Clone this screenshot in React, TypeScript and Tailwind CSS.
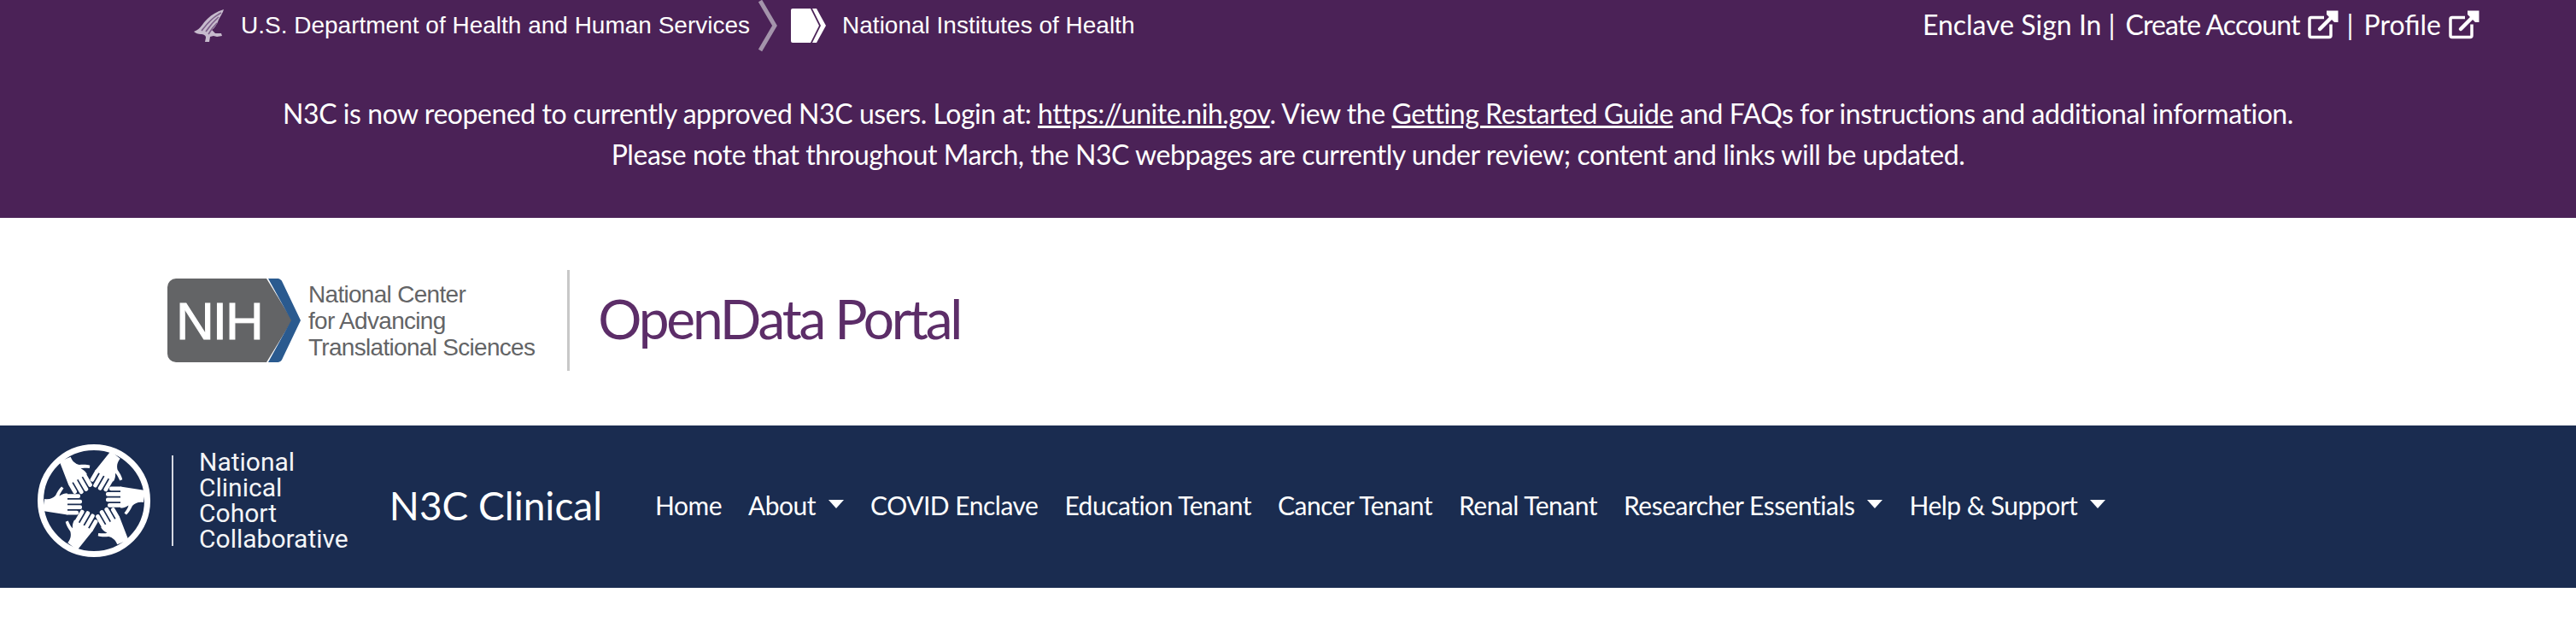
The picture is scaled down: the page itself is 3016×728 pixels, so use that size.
const body = { fontFamily: 'Lato, "Noto Sans", sans-serif' };
const arial = { fontFamily: '"Liberation Sans", Arial, sans-serif' };

function ExternalIcon() {
  return (
    <svg width="36" height="34" viewBox="0 0 36 34" className="ml-[9px] shrink-0">
      <path d="M19 8.5H4a2 2 0 0 0-2 2v19a2 2 0 0 0 2 2h21a2 2 0 0 0 2-2v-13" fill="none" stroke="white" strokeWidth="3.5" />
      <path d="M14 22L30 6" fill="none" stroke="white" strokeWidth="4.5" strokeLinecap="round" />
      <path d="M22 0.5H35.5V14L31 14L22 5z" fill="white" />
    </svg>
  );
}

function Eagle() {
  return (
    <svg width="38" height="40" viewBox="0 0 38 40" className="shrink-0">
      <path d="M1 27C7 25 10 20 14 15C19 9 26 4 36 1C35 5 32 9 30 13C28 19 25 23 22 25L26 29L33 29L34 32L28 33L24 32L20 33L19 39L14 39L15 34C15 31 12 30 9 30C6 30 3 29 1 27Z" fill="#c7bbcd" />
      <path d="M10 26C15 20 21 11 33 5M15 27C19 21 24 15 30 10M18 30C21 25 24 21 28 17" stroke="#7d5e89" strokeWidth="1.6" fill="none" />
    </svg>
  );
}

function Hand({ angle }: { angle: number }) {
  return (
    <g transform={`rotate(${angle})`}>
      <path d="M31 -16.5L60 -12L58 2C52 1 48 3 45 6C43 10 41 14 38 16.5L35.5 14.5C38 11 40 8 40.5 5.5C37 8 34 8.5 31 8.5Z" fill="white" />
      <rect x="18" y="-16.5" width="15" height="4.8" rx="2" fill="white" />
      <rect x="14" y="-10" width="19" height="4.8" rx="2" fill="white" />
      <rect x="14" y="-3.5" width="19" height="4.8" rx="2" fill="white" />
      <rect x="16" y="3" width="17" height="4.8" rx="2" fill="white" />
    </g>
  );
}

function HandsLogo() {
  return (
    <svg width="134" height="134" viewBox="-67 -67 134 134" className="shrink-0">
      <circle cx="0" cy="0" r="62.5" fill="none" stroke="white" strokeWidth="7" />
      {[0, 60, 120, 180, 240, 300].map((a) => (
        <Hand key={a} angle={a} />
      ))}
    </svg>
  );
}

function NavItem({ label, caret }: { label: string; caret?: boolean }) {
  return (
    <a className="flex items-center text-[30px] tracking-[-0.5px] text-white">
      {label}
      {caret && <span className="ml-[15px] mt-[-2px] h-0 w-0 border-x-[9px] border-t-[10px] border-x-transparent border-t-white" />}
    </a>
  );
}

export default function App() {
  return (
    <div className="w-[3016px] bg-white" style={body}>
      <div className="h-[255px] bg-[#4b2257] text-white">
        <div className="flex h-[60px] items-center justify-between pl-[226px] pr-[113px]">
          <div className="flex items-center">
            <Eagle />
            <span className="ml-[18px] text-[28px] text-white" style={arial}>U.S. Department of Health and Human Services</span>
            <svg width="22" height="62" viewBox="0 0 22 62" className="ml-[10px]">
              <path d="M2 2L19 31L2 60" fill="none" stroke="#a494ab" strokeWidth="5" />
            </svg>
            <svg width="41" height="40" viewBox="0 0 41 40" className="ml-[16px]">
              <path d="M0 2a2 2 0 0 1 2-2h21l10 20-10 20H2a2 2 0 0 1-2-2z" fill="white" />
              <path d="M25 0H30L41 20L30 40H25L35 20Z" fill="white" />
            </svg>
            <span className="ml-[19px] text-[28px] text-white" style={arial}>National Institutes of Health</span>
          </div>
          <div className="mt-[-2px] flex items-center text-[32px]">
            <span>Enclave Sign In</span>
            <span className="ml-[8px] mr-[12px]">|</span>
            <span className="tracking-[-0.9px]">Create Account</span>
            <ExternalIcon />
            <span className="ml-[10px] mr-[12px]">|</span>
            <span>Profile</span>
            <ExternalIcon />
          </div>
        </div>
        <div className="mt-[49px] text-center text-[32px] leading-[48px] tracking-[-0.45px]">
          <p>
            N3C is now reopened to currently approved N3C users. Login at: <u>https://unite.nih.gov</u>. View the <u>Getting Restarted Guide</u> and FAQs for instructions and additional information.
          </p>
          <p>Please note that throughout March, the N3C webpages are currently under review; content and links will be updated.</p>
        </div>
      </div>

      <div className="flex h-[243px] items-center pl-[196px]">
        <svg width="156" height="98" viewBox="0 0 156 98" className="mt-[-4px] shrink-0">
          <path d="M10 0H116L146 49L116 98H10A10 10 0 0 1 0 88V10A10 10 0 0 1 10 0Z" fill="#636466" />
          <path d="M118 0H128C132 0 134 2 135 5L156 49L135 93C134 96 132 98 128 98H118L145 49Z" fill="#2a5a8f" />
          <text x="10" y="71" fill="white" fontSize="62" fontWeight="500" stroke="white" strokeWidth="1" style={arial} letterSpacing="-2">NIH</text>
        </svg>
        <div className="ml-[9px] mt-[-3px] text-[28px] leading-[31px] tracking-[-0.7px] text-[#636466]" style={arial}>
          <div>National Center</div>
          <div>for Advancing</div>
          <div>Translational Sciences</div>
        </div>
        <div className="ml-[38px] mt-[-4px] h-[118px] w-[3px] bg-[#c8c8c8]" />
        <div className="ml-[33px] mt-[-8px] text-[64px] tracking-[-3.2px] text-[#5c2d68]">OpenData Portal</div>
      </div>

      <div className="flex h-[190px] items-center bg-[#1a2c50] pl-[43px] text-white">
        <div className="mt-[-14px] flex items-center">
          <HandsLogo />
          <div className="ml-[24px] h-[106px] w-[2px] bg-[#d5d9e2]" />
          <div className="ml-[30px] text-[30px] leading-[30px] text-[#f4f5f7]" style={{ fontFamily: 'Roboto, sans-serif' }}>
            <div>National</div>
            <div>Clinical</div>
            <div>Cohort</div>
            <div>Collaborative</div>
          </div>
        </div>
        <div className="ml-[48px] mt-[-4px] text-[46px]">N3C Clinical</div>
        <nav className="ml-[62px] mt-[-4px] flex items-center gap-[31px]">
          <NavItem label="Home" />
          <NavItem label="About" caret />
          <NavItem label="COVID Enclave" />
          <NavItem label="Education Tenant" />
          <NavItem label="Cancer Tenant" />
          <NavItem label="Renal Tenant" />
          <NavItem label="Researcher Essentials" caret />
          <NavItem label="Help & Support" caret />
        </nav>
      </div>
      <div className="h-[40px]" />
    </div>
  );
}
